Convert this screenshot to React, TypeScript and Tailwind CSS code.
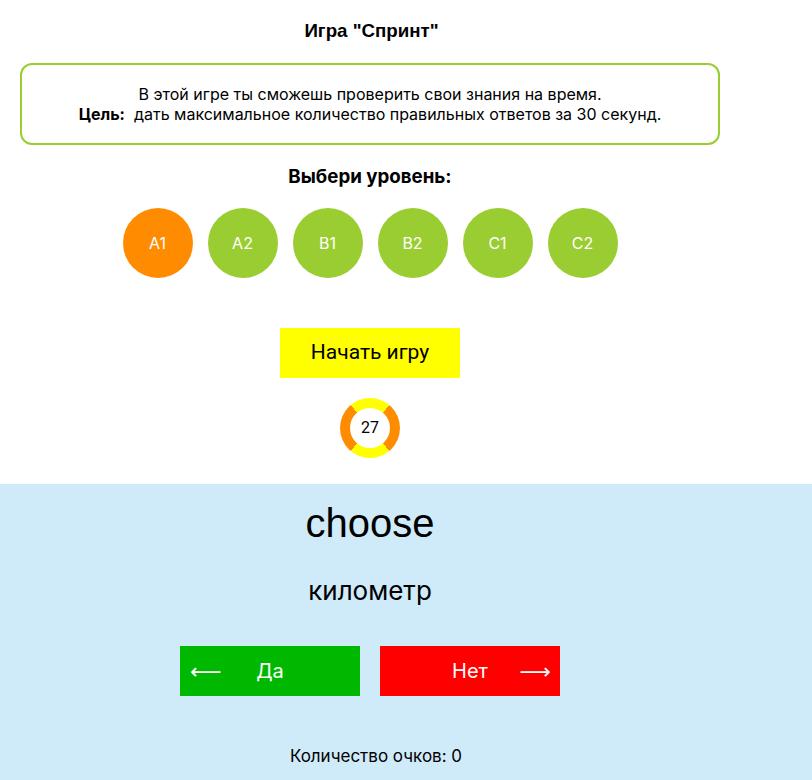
const levels = ["A1", "A2", "B1", "B2", "C1", "C2"];

export default function App() {
  const active = "A1";
  return (
    <div className="min-h-[780px] bg-white text-black" style={{ fontFamily: 'Inter, "Liberation Sans", sans-serif' }}>
      <div className="flex w-[740px] flex-col items-center pt-[20px]">
        <h2 className="pl-[3px] text-[18.72px] font-bold leading-[22px]" style={{ fontFamily: '"Liberation Sans", Arial, sans-serif' }}>
          Игра "Спринт"
        </h2>
        <div className="mt-[21px] w-[700px] rounded-[12px] border-2 border-[#9acd32] py-[19px] text-center text-[16px] leading-[20px]">
          <p>В этой игре ты сможешь проверить свои знания на время.</p>
          <p>
            <b>Цель:</b>&nbsp; дать максимальное количество правильных ответов за 30 секунд.
          </p>
        </div>
        <h3 className="mt-[21px] text-[18.72px] font-bold leading-[22px]">Выбери уровень:</h3>
        <div className="mt-[20px] flex gap-[15px]">
          {levels.map((l) => (
            <button
              key={l}
              className={`flex h-[70px] w-[70px] items-center justify-center rounded-full text-[16px] text-white ${l === active ? "bg-[#ff8c00]" : "bg-[#9acd32]"}`}
            >
              {l}
            </button>
          ))}
        </div>
        <button className="mt-[50px] h-[50px] w-[180px] bg-[#ffff00] text-[21px]" style={{ fontFamily: "Roboto, sans-serif" }}>
          Начать игру
        </button>
        <div
          className="mt-[20px] mb-[26px] flex h-[60px] w-[60px] items-center justify-center rounded-full"
          style={{
            background:
              "conic-gradient(#ffff00 0deg 40deg, #ff8c00 40deg 140deg, #ffff00 140deg 220deg, #ff8c00 220deg 320deg, #ffff00 320deg 360deg)",
          }}
        >
          <div className="flex h-[40px] w-[40px] items-center justify-center rounded-full bg-white text-[16px]" style={{ fontFamily: "Roboto, sans-serif" }}>
            27
          </div>
        </div>
      </div>
      <div className="bg-[#cfeaf8] pb-[12px]">
        <div className="flex w-[740px] flex-col items-center pt-[15px]">
          <div className="text-[40px] leading-[48px]" style={{ fontFamily: '"Liberation Sans", Arial, sans-serif' }}>
            choose
          </div>
          <div className="mt-[28px] text-[26px] leading-[32px]">километр</div>
          <div className="mt-[39px] flex gap-[20px]">
            <button className="grid h-[50px] w-[180px] grid-cols-[40px_1fr_40px] items-center bg-[#00b800] px-[10px] text-[20px] text-white">
              <span className="text-left text-[22px]" style={{ fontFamily: '"DejaVu Sans", sans-serif' }}>⟵</span>
              <span>Да</span>
              <span />
            </button>
            <button className="grid h-[50px] w-[180px] grid-cols-[40px_1fr_40px] items-center bg-[#ff0000] px-[9px] text-[20px] text-white">
              <span />
              <span>Нет</span>
              <span className="text-right text-[22px]" style={{ fontFamily: '"DejaVu Sans", sans-serif' }}>⟶</span>
            </button>
          </div>
          <div className="mt-[48px] pl-[12px] text-[17px] leading-[24px]">Количество очков: 0</div>
        </div>
      </div>
    </div>
  );
}
